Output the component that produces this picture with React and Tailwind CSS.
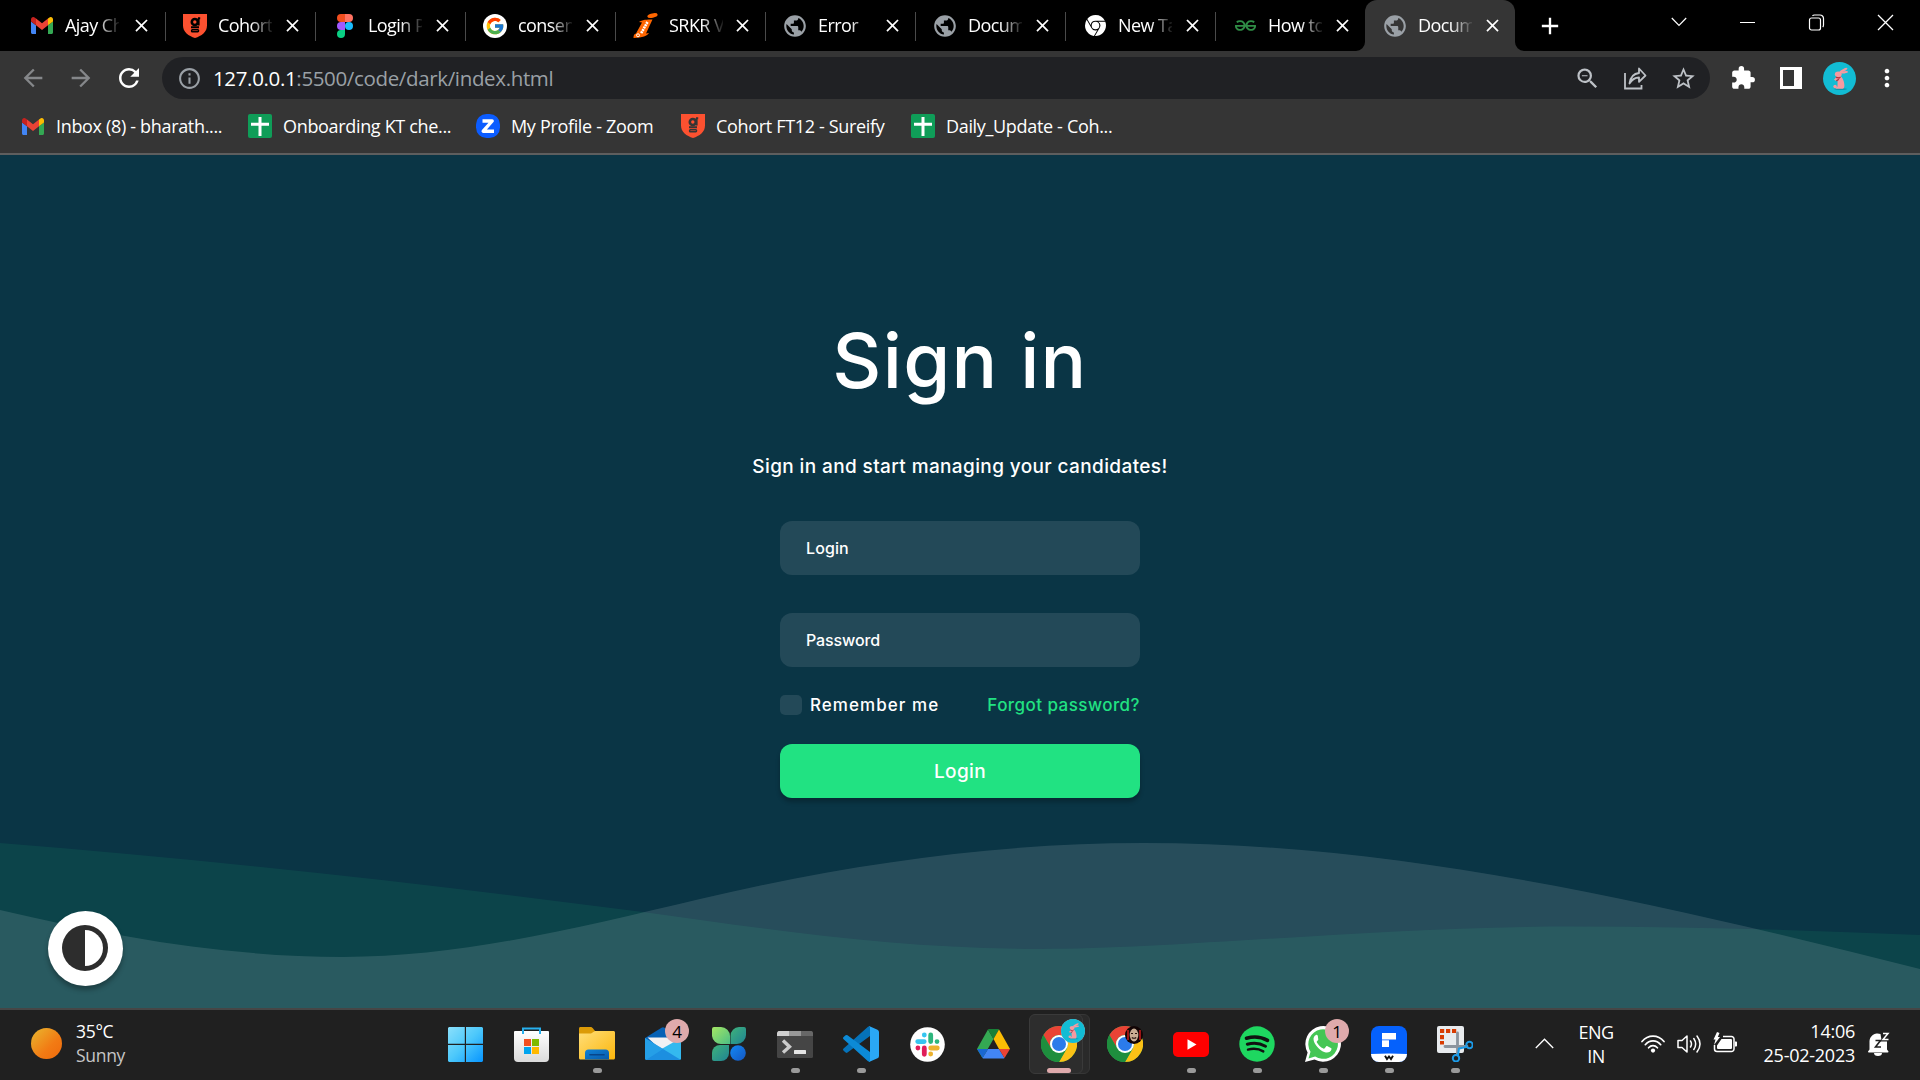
import React from "react";
import {
  MdArrowBack, MdArrowForward, MdRefresh, MdInfoOutline, MdZoomOut, MdStarBorder,
  MdExtension, MdMoreVert, MdClose, MdPublic, MdAdd,
} from "react-icons/md";
import { FcGoogle } from "react-icons/fc";
import { SiGeeksforgeeks, SiGooglechrome } from "react-icons/si";

/* ---------- brand icons ---------- */

const Gmail = () => (
  <svg width="22" height="17" viewBox="52 42 88 66" preserveAspectRatio="none">
    <path fill="#4285f4" d="M58 108h14V74L52 59v43c0 3.32 2.69 6 6 6" />
    <path fill="#34a853" d="M120 108h14c3.32 0 6-2.69 6-6V59l-20 15" />
    <path fill="#fbbc04" d="M120 48v26l20-15v-8c0-7.42-8.47-11.65-14.4-7.2" />
    <path fill="#ea4335" d="M72 74V48l24 18 24-18v26L96 92" />
    <path fill="#c5221f" d="M52 51v8l20 15V48l-5.6-4.2c-5.94-4.45-14.4-.22-14.4 7.2" />
  </svg>
);

const Shield = ({ dark }) => (
  <svg width="24" height="24" viewBox="0 0 24 24">
    <path fill="#fc5130" d="M0 0h24v11.5C24 18 18.5 22 12 24 5.500 22 0 18 0 11.500z" />
    <g fill="none" stroke={dark} strokeWidth="2">
      <circle cx="11.800" cy="8" r="3" strokeWidth="2.600" />
      <path d="M15 4.300h2.200M15.600 4v7.500M8 13.300h8" />
      <path d="M9.500 15.800h5.300c1 0 1 1.900 0 1.900H9.300c-1 0-1-1.500 0-1.900z" strokeWidth="1.500" />
    </g>
  </svg>
);

const Figma = () => (
  <svg width="16" height="24" viewBox="0 0 16 24">
    <path fill="#f24e1e" d="M8 0H4a4 4 0 0 0 0 8h4z" />
    <path fill="#ff7262" d="M8 0h4a4 4 0 0 1 0 8H8z" />
    <path fill="#a259ff" d="M8 8H4a4 4 0 0 0 0 8h4z" />
    <circle fill="#1abcfe" cx="12" cy="12" r="4" />
    <path fill="#0acf83" d="M4 16h4v4a4 4 0 1 1-4-4z" />
  </svg>
);

const GoogleBadge = () => (
  <span className="flex size-6 items-center justify-center rounded-full bg-white">
    <FcGoogle size={20} />
  </span>
);

const Srkr = () => (
  <svg width="25" height="25" viewBox="0 0 25 25">
    <ellipse cx="19.500" cy="2.600" rx="5.200" ry="2.200" fill="#f60" transform="rotate(-12 19.500 2.600)" />
    <path fill="#f60" d="M6 9c3-2.500 8-2.600 13.500-2.600L13 20.500l3-.5c-2 3-6 4.600-15.500 5 0-3 .8-4 2.500-4.500L9 9.500z" />
    <path d="M14.500 9 8 20.500" stroke="#fff" strokeWidth="2.600" strokeDasharray="2 .7" />
    <circle cx="5" cy="22.300" r="1.500" fill="none" stroke="#fff" />
  </svg>
);

const Sheet = () => (
  <svg width="24" height="24" viewBox="0 0 24 24">
    <rect width="24" height="24" rx="2" fill="#0f9d58" />
    <path d="M12 3v19M3 10.300h18" stroke="#fff" strokeWidth="3" />
  </svg>
);

const Zoom = () => (
  <svg width="24" height="24" viewBox="0 0 24 24">
    <rect width="24" height="24" rx="10.500" fill="#0b5cff" />
    <path d="M6.500 7h9.700l-9 10.200H18" fill="none" stroke="#fff" strokeWidth="3.400" strokeLinejoin="round" />
  </svg>
);

const Share = () => (
  <svg width="24" height="24" viewBox="0 0 24 24" fill="none" stroke="#bdc1c6" strokeWidth="1.800">
    <path d="M2 7v15.500h16.500V19" />
    <path d="M6.500 17.500C7.500 11 11 7.500 16 7V2.500l6.500 7-6.500 6.300v-4.300c-4 0-7 1.800-9.500 6z" strokeLinejoin="round" />
  </svg>
);

const Rabbit = ({ size }) => (
  <svg width={size} height={size} viewBox="0 0 32 32">
    <circle cx="16" cy="16" r="16" fill="#12bcd4" />
    <ellipse cx="17" cy="26.300" rx="6.500" ry=".8" fill="#0c97ab" />
    <g fill="#f59aa0">
      <ellipse cx="19.800" cy="8" rx="4.300" ry="1.200" transform="rotate(-28 19.800 8)" />
      <ellipse cx="20.500" cy="10" rx="3.800" ry="1.100" transform="rotate(-8 20.500 10)" />
      <ellipse cx="14.800" cy="11.800" rx="3.300" ry="2.600" />
      <path d="M14 13c3-.5 5 2 6 5.500 1 3.500 1.300 7.200-1 7.500h-6c-1.800-.5-.5-1.700 1-2 .3-3 0-5 .2-7.500l-2 1.700-1.500-1z" />
      <circle cx="11.700" cy="23.800" r="1.700" />
    </g>
    <path d="m12.500 15 3.200.5 1.300-1M13 18.300l2.500-1.500" fill="none" stroke="#b8323f" strokeWidth="1.200" />
  </svg>
);

const Chrome = () => (
  <svg width="36" height="36" viewBox="0 0 36 36">
    <circle cx="18" cy="18" r="18" fill="#34a853" />
    <path fill="#ea4335" d="M2.400 9A18 18 0 0 1 33.600 9H18a9 9 0 0 0-7.800 13.500z" />
    <path fill="#fbc116" d="M33.600 9A18 18 0 0 1 18 36l7.800-13.500A9 9 0 0 0 18 9z" />
    <path fill="#1e8e3e" d="M2.400 9A18 18 0 0 0 18 36l7.800-13.500A9 9 0 0 1 10.200 22.500z" />
    <circle cx="18" cy="18" r="9" fill="#fff" />
    <circle cx="18" cy="18" r="7" fill="#2b7bea" />
  </svg>
);

const Windows = () => (
  <svg width="35" height="35" viewBox="0 0 35 35">
    <defs>
      <linearGradient id="win" x1="0" y1="0" x2="35" y2="35" gradientUnits="userSpaceOnUse">
        <stop stopColor="#8be0fb" /><stop offset=".5" stopColor="#4cc8fb" /><stop offset="1" stopColor="#0795ff" />
      </linearGradient>
    </defs>
    <path fill="url(#win)" d="M1 0h15.800v16.800H0V1zM18 0h16l1 1v15.800H18zM0 18h16.800v17H1l-1-1zM18 18h17v16l-1 1H18z" />
  </svg>
);

const Store = () => (
  <svg width="35" height="35" viewBox="0 0 35 35">
    <defs>
      <linearGradient id="bag" x1="0" y1="0" x2="0" y2="1"><stop stopColor="#fff" /><stop offset="1" stopColor="#dadada" /></linearGradient>
    </defs>
    <path d="M9 6V1.500h17V6" fill="none" stroke="#27b0ee" strokeWidth="2" />
    <path fill="url(#bag)" d="M1 4h33a1 1 0 0 1 1 1v26a4 4 0 0 1-4 4H4a4 4 0 0 1-4-4V5a1 1 0 0 1 1-1z" />
    <path fill="#f25022" d="M10 12h7v7h-7z" /><path fill="#7fba00" d="M18 12h7v7h-7z" />
    <path fill="#00a4ef" d="M10 20h7v7h-7z" /><path fill="#ffb900" d="M18 20h7v7h-7z" />
    <path d="M9 4v3M26 4v3" stroke="#27b0ee" strokeWidth="2" />
  </svg>
);

const Folder = () => (
  <svg width="36" height="34" viewBox="0 0 36 34">
    <defs>
      <linearGradient id="fold" x1="0" y1="0" x2="1" y2="1"><stop stopColor="#ffde79" /><stop offset="1" stopColor="#fcb60b" /></linearGradient>
      <linearGradient id="foldb" x1="0" y1="0" x2="1" y2="1"><stop stopColor="#1083d8" /><stop offset="1" stopColor="#0859a9" /></linearGradient>
    </defs>
    <path fill="#dc9b08" d="M1.500 0h10c1 0 1.500.4 2.200 1.100L16 4v6H0V1.500C0 .6.600 0 1.500 0z" />
    <path fill="url(#fold)" d="M0 6.500h12L16 4h18.500c.9 0 1.500.6 1.500 1.500V31c0 .9-.6 1.500-1.500 1.500h-33C.6 32.500 0 31.900 0 31z" />
    <path fill="url(#foldb)" d="M6 32.500V26a3.500 3.500 0 0 1 3.500-3.500h17A3.500 3.500 0 0 1 30 26v6.500z" />
    <path d="M11 27.800h14" stroke="#07458a" strokeWidth="1.600" strokeLinecap="round" />
  </svg>
);

const Mail = () => (
  <svg width="36" height="34" viewBox="0 0 36 34">
    <path fill="#0661b5" d="M0 11 16.500.7a3 3 0 0 1 3 0L36 11v8H0z" />
    <path fill="#f2f2f4" d="M2.500 10.500h31v10L18 25z" />
    <path fill="#34b9ef" d="M36 11v21a2 2 0 0 1-2 1L16 22.300z" />
    <path fill="#1c8fe0" d="m0 11 36 22H1.500C.6 33 0 32.400 0 31.500z" />
    <path fill="#2aa5ea" d="m0 11 18 11-17 11L0 31.500z" opacity=".7" />
  </svg>
);

const Clover = () => (
  <svg width="34" height="34" viewBox="0 0 34 34">
    <defs>
      <linearGradient id="c1" x1="0" y1="0" x2="1" y2="1"><stop stopColor="#a4e663" /><stop offset="1" stopColor="#4dbf85" /></linearGradient>
      <linearGradient id="c2" x1="0" y1="0" x2="1" y2="1"><stop stopColor="#3fb27a" /><stop offset="1" stopColor="#1f8494" /></linearGradient>
      <linearGradient id="c3" x1="0" y1="0" x2="1" y2="1"><stop stopColor="#1389f5" /><stop offset="1" stopColor="#1457c2" /></linearGradient>
    </defs>
    <path fill="url(#c1)" d="M2 0h7a9 9 0 0 1 9 9v8H9a9 9 0 0 1-9-8V2a2 2 0 0 1 2-2z" />
    <path fill="url(#c2)" d="M34 2v6a9 9 0 0 1-9 9h-6.500V9A9 9 0 0 1 27 0h5a2 2 0 0 1 2 2z" />
    <path fill="url(#c2)" d="M0 32v-6a8 8 0 0 1 8-8h9v8a8 8 0 0 1-8 8H2a2 2 0 0 1-2-2z" />
    <circle cx="26" cy="26" r="7.800" fill="url(#c3)" />
  </svg>
);

const Terminal = () => (
  <svg width="36" height="27" viewBox="0 0 36 27">
    <rect width="36" height="27" rx="1.500" fill="#454545" />
    <path fill="#cfcfcf" d="M1.500 0H12v5H0V1.500z" /><path fill="#989898" d="M12 0h12v5H12z" /><path fill="#676767" d="M24 0h10.500L36 1.500V5H24z" />
    <path d="m6 9.500 6.500 6.300L6 21.500" fill="none" stroke="#ccc" strokeWidth="3.400" />
    <rect x="17" y="19" width="12" height="4" rx=".6" fill="#e4e4e4" />
  </svg>
);

const VsCode = () => (
  <svg width="36" height="36" viewBox="0 0 36 36">
    <path fill="#0572b9" d="M27 0v10L4.500 26.500a1.500 1.500 0 0 1-1.900 0L.6 24.700a1.500 1.500 0 0 1 0-2.200L25 .8z" />
    <path fill="#0c8ad6" d="M27 36V26L4.500 9.300a1.500 1.500 0 0 0-1.900 0l-2 1.800a1.500 1.500 0 0 0 0 2.200L25 35.200z" />
    <path fill="#2aa8f5" d="m26 0 8.500 3.700A2.500 2.500 0 0 1 36 6v24a2.500 2.500 0 0 1-1.500 2.300L26 36c.6-.5 1-1 1-2V2c0-1-.4-1.500-1-2z" />
  </svg>
);

const Slack = () => (
  <svg width="35" height="35" viewBox="0 0 35 35">
    <circle cx="17.500" cy="17.500" r="17.300" fill="#fff" />
    <g strokeWidth="4.800" strokeLinecap="round">
      <path d="M14.300 8v.01M7.700 14.600h6.500" stroke="#36c5f0" />
      <path d="M20.700 8v6.500M27 14.600h.01" stroke="#2eb67d" />
      <path d="M20.700 21h6.600M20.700 27v.01" stroke="#ecb22e" />
      <path d="M14.300 21v6.300M7.900 21h.01" stroke="#e01e5a" />
    </g>
  </svg>
);

const Drive = () => (
  <svg width="33" height="30" viewBox="0 0 33 30">
    <path fill="#34a853" d="M11 .5 0 20l5.500 9L16.500 10z" />
    <path fill="#188038" d="M11 .5C11.500 0 12 0 12.500 0h8c.6 0 1 .1 1.500.5L16.500 10z" />
    <path fill="#fbbc04" d="M22 .5 33 20H22L16.500 10z" />
    <path fill="#4285f4" d="M11 20h11l5.500 9c-.4.400-.8.500-1.200.5H6.700c-.4 0-.8-.1-1.200-.5z" />
    <path fill="#1967d2" d="M0 20h11l-5.500 9z" />
    <path fill="#ea4335" d="M22 20h11l-5.500 9z" />
  </svg>
);

const YouTube = () => (
  <svg width="36" height="25" viewBox="0 0 36 25">
    <rect width="36" height="25" rx="5" fill="#f00" />
    <path fill="#fff" d="m14.500 7.200 9 5.300-9 5.300z" />
  </svg>
);

const Spotify = () => (
  <svg width="36" height="36" viewBox="0 0 36 36">
    <circle cx="18" cy="18" r="17.700" fill="#1ed760" />
    <g fill="none" stroke="#111" strokeLinecap="round">
      <path d="M7.500 12.200c7-2 15-1.300 21 2.200" strokeWidth="3.600" />
      <path d="M8.300 18.200c6-1.700 13-1 18.200 2" strokeWidth="3" />
      <path d="M9 23.600c5.500-1.400 11-.8 15.300 1.800" strokeWidth="2.400" />
    </g>
  </svg>
);

const WhatsApp = () => (
  <svg width="36" height="36" viewBox="0 0 36 36">
    <path fill="#fff" d="M0 36 2.600 26.500A17.800 17.800 0 1 1 9.500 33.400z" />
    <path fill="#45c655" d="m3.500 32.500 2-6.700a14.800 14.800 0 1 1 4.600 4.700z" />
    <path fill="#fff" d="M12.800 9.700c-.5-.9-1.200-.9-1.800-.8-1.800.6-2.800 2.700-2.400 5.100.6 4.300 5.800 10.500 11.300 12.300 3 .9 6-.3 6.500-2.700.2-1 .1-1.300-.5-1.700l-3.400-1.700c-.6-.2-1-.1-1.400.4l-1.400 1.700c-.4.400-.7.500-1.300.2-3-1.300-5-3.400-6.500-6-.3-.5-.2-.8.1-1.200l1.100-1.400c.3-.4.300-.8.100-1.200z" />
  </svg>
);

const BlueF = () => (
  <svg width="36" height="36" viewBox="0 0 36 36">
    <rect width="36" height="36" rx="8" fill="#0561fc" />
    <path fill="#fff" d="M0 28c12-.8 24-.8 36 0a8 8 0 0 1-8 8H8a8 8 0 0 1-8-8z" />
    <path fill="#fff" d="M11 7h14v6.500h-7V21h-7z" />
    <path fill="#0561fc" d="M11 13.500h7v.8h-7z" />
    <path d="m14 29.800 2 3.200 2-2.500 2 2.500 2-3.200" fill="none" stroke="#111" strokeWidth="1.900" />
  </svg>
);

const Snip = () => (
  <svg width="36" height="36" viewBox="0 0 36 36">
    <rect width="27" height="27" rx="2" fill="#e8ebee" />
    <path d="M3 5h16.500M5 9v9.500" fill="none" stroke="#d83b01" strokeWidth="4" strokeDasharray="4.200 1.800" />
    <path d="M20.500 7v22M8 20.500h22" stroke="#8b949e" strokeWidth="2.800" strokeLinecap="round" />
    <circle cx="32.500" cy="19" r="3.200" fill="none" stroke="#1c9be8" strokeWidth="2" />
    <circle cx="19" cy="32.200" r="3.200" fill="none" stroke="#1c9be8" strokeWidth="2" />
    <path d="m21 29 1-6.500 7-1.500" fill="none" stroke="#1c9be8" strokeWidth="2" />
  </svg>
);

const Mask = () => (
  <svg width="18" height="18" viewBox="0 0 18 18">
    <circle cx="9" cy="9" r="9" fill="#120505" />
    <path d="M3 4v10M15 4v10" stroke="#9a1515" strokeWidth="2" />
    <ellipse cx="9" cy="9" rx="4.300" ry="6.500" fill="#c9ad93" />
    <path d="M6 7.500h2M10 7.500h2M6.800 11.500c1.500 1 3 1 4.400 0" stroke="#2b1510" strokeWidth="1.200" fill="none" />
  </svg>
);

/* ---------- browser ---------- */

const globe = <MdPublic size={26} color="#9aa0a6" />;

const tabs = [
  { title: "Ajay Ch", icon: <Gmail />, first: true },
  { title: "Cohort", icon: <Shield dark="#000" /> },
  { title: "Login P", icon: <Figma /> },
  { title: "consen", icon: <GoogleBadge /> },
  { title: "SRKR V", icon: <Srkr />, wide: true },
  { title: "Error", icon: globe },
  { title: "Docum", icon: globe },
  { title: "New Ta", icon: <SiGooglechrome size={21} color="#fff" /> },
  { title: "How to", icon: <SiGeeksforgeeks size={21} color="#2f8d46" /> },
  { title: "Docum", icon: globe, active: true },
];

function Tab({ title, icon, active, first, last, wide }) {
  return (
    <div className={`relative flex h-full w-[150px] shrink-0 items-center ${active ? "rounded-t-[12px] bg-[#353535]" : ""}`}>
      <span className={`flex w-[26px] shrink-0 justify-center ${first ? "ml-[14px]" : "ml-[17px]"}`}>{icon}</span>
      <span className={`w-[54px] overflow-hidden whitespace-nowrap text-[18px] leading-6 tracking-[-0.55px] text-white [mask-image:linear-gradient(to_right,#000_60%,transparent_104%)] ${wide ? "ml-[11px] -mr-px" : "ml-[10px]"}`}>
        <span className="-mt-px block">{title}</span>
      </span>
      <MdClose size={21} className={`shrink-0 text-white ${first ? "ml-[12px]" : "ml-[10px]"}`} />
      {!active && !last && <span className="absolute -right-px top-3 h-[29px] w-[1.5px] bg-[#4a4a4a]" />}
      {active && (
        <>
          <svg className="absolute -left-[9px] bottom-0" width="9" height="9"><path d="M9 0v9H0A9 9 0 0 0 9 0z" fill="#353535" /></svg>
          <svg className="absolute -right-[9px] bottom-0" width="9" height="9"><path d="M0 0v9h9A9 9 0 0 1 0 0z" fill="#353535" /></svg>
        </>
      )}
    </div>
  );
}

function TabStrip() {
  return (
    <div className="flex h-[51px] bg-black pl-[15px]">
      {tabs.map((t, i) => <Tab key={i} {...t} last={i === 8} />)}
      <div className="flex h-full w-[69px] items-center justify-center">
        <MdAdd size={28} className="text-white" />
      </div>
      <div className="ml-auto flex h-[44px] text-white">
        <div className="flex w-[69px] items-center justify-center">
          <svg width="16" height="10" fill="none" stroke="currentColor" strokeWidth="1.200"><path d="m.8 1 7.200 7.500L15.200 1" /></svg>
        </div>
        <div className="flex w-[69px] items-center justify-center"><span className="h-px w-[15px] bg-white" /></div>
        <div className="flex w-[69px] items-center justify-center">
          <svg width="17" height="17" viewBox="0 0 17 17" fill="none" stroke="currentColor" strokeWidth="1.200">
            <rect x="1.500" y="4" width="11" height="12" rx="2" /><path d="M4.500 1.800c.5-.7 1-.8 2-.8H12a3.500 3.500 0 0 1 3.500 3.500V11c0 1-.2 1.500-.8 2" />
          </svg>
        </div>
        <div className="flex w-[69px] items-center justify-center">
          <svg width="17" height="17" fill="none" stroke="currentColor" strokeWidth="1.300"><path d="m1 1 15 15M16 1 1 16" /></svg>
        </div>
      </div>
    </div>
  );
}

function AddressBar() {
  return (
    <div className="flex h-[54px] items-center">
      <div className="ml-[9px] flex w-[48px] justify-center"><MdArrowBack size={28} color="#85878a" /></div>
      <div className="flex w-[48px] justify-center"><MdArrowForward size={28} color="#85878a" /></div>
      <div className="flex w-[48px] justify-center"><MdRefresh size={30} color="#fff" /></div>
      <div className="ml-[9px] flex h-[42px] w-[1548px] items-center rounded-full bg-[#202124]">
        <MdInfoOutline size={25} color="#9aa0a6" className="ml-[15px]" />
        <span className="ml-[11px] text-[20.500px] leading-none tracking-[-0.35px] text-[#9aa0a6]"><span className="text-white">127.0.0.1</span>:5500/code/dark/index.html</span>
        <div className="ml-auto mr-[3px] flex">
          <span className="flex w-12 items-center justify-center"><MdZoomOut size={27} color="#bdc1c6" /></span>
          <span className="flex w-12 items-center justify-center"><Share /></span>
          <span className="flex w-12 items-center justify-center"><MdStarBorder size={27} color="#bdc1c6" /></span>
        </div>
      </div>
      <div className="ml-[9px] flex w-12 justify-center"><MdExtension size={26} color="#fff" /></div>
      <div className="flex w-12 justify-center">
        <svg width="22" height="22"><path fill="#fff" fillRule="evenodd" d="M0 0h22v22H0zM3 3v16h11V3z" /></svg>
      </div>
      <div className="flex w-[49px] justify-center"><Rabbit size={33} /></div>
      <div className="flex w-[45px] justify-center"><MdMoreVert size={28} color="#fff" /></div>
    </div>
  );
}

function Bookmark({ icon, label, width }) {
  return (
    <div className={`flex shrink-0 items-center ${width}`}>
      <span className="flex w-6 justify-center">{icon}</span>
      <span className="-mt-px ml-[11px] whitespace-nowrap text-[18px] leading-6 tracking-[-0.33px] text-white">{label}</span>
    </div>
  );
}

function Bookmarks() {
  return (
    <div className="flex h-[48px] items-center pb-[6px] pl-[21px]">
      <Bookmark icon={<Gmail />} label="Inbox (8) - bharath...." width="w-[227px]" />
      <Bookmark icon={<Sheet />} label="Onboarding KT che..." width="w-[228px]" />
      <Bookmark icon={<Zoom />} label="My Profile - Zoom" width="w-[205px]" />
      <Bookmark icon={<Shield dark="#353535" />} label="Cohort FT12 - Sureify" width="w-[230px]" />
      <Bookmark icon={<Sheet />} label="Daily_Update - Coh..." width="w-[210px]" />
    </div>
  );
}

/* ---------- page ---------- */

function Waves() {
  return (
    <svg className="absolute bottom-0 left-0" width="1920" height="168" viewBox="0 840 1920 168">
      <path fill="#21e282" fillOpacity=".09" d="M0 843C214 860 429 884 643 912 779 931 900 949 1040 949c138 0 340-22.500 532-22.500 116 0 232 3.500 348 8.500v73H0z" />
      <path fill="#fff" fillOpacity=".12" d="M0 910c114 27 229 47 343 47 119 0 238-30 357-58 148-35 296-56 444-56 259 0 517 61 776 126v39H0z" />
    </svg>
  );
}

function SignInPage() {
  return (
    <main className="relative flex h-[853px] flex-col items-center bg-[#0a3545] font-['Inter',sans-serif] font-medium text-white">
      <Waves />
      <h1 className="mt-[159px] h-[92px] whitespace-nowrap text-[76px] leading-[92px] tracking-[1.3px]">Sign in</h1>
      <p className="mt-[49px] h-6 whitespace-nowrap text-[19px] leading-6 tracking-[0.38px]">Sign in and start managing your candidates!</p>
      <form className="relative mt-[42px] flex w-[360px] flex-col">
        <div className="flex h-[54px] items-center rounded-[12px] bg-[#234958] pl-[26px] text-[16px] tracking-[0.1px]">Login</div>
        <div className="mt-[38px] flex h-[54px] items-center rounded-[12px] bg-[#234958] pl-[26px] text-[16px] tracking-[-0.1px]">Password</div>
        <div className="mt-[28px] flex h-5 items-center text-[17px] leading-5">
          <span className="h-5 w-[22px] rounded-[5px] bg-[#234958]" />
          <span className="ml-2 whitespace-nowrap tracking-[1.05px]">Remember me</span>
          <span className="ml-auto whitespace-nowrap tracking-[0.45px] text-[#21e282]">Forgot password?</span>
        </div>
        <button type="button" className="mt-[29px] h-[54px] rounded-[12px] bg-[#21e282] pt-0.5 text-[19px] tracking-[0.4px] shadow-[0_4px_4px_rgba(0,0,0,0.25)]">Login</button>
      </form>
      <div className="absolute bottom-[22px] left-[47.5px] flex size-[75px] items-center justify-center rounded-full bg-white shadow-[0_4px_5px_rgba(0,0,0,0.3)]">
        <svg width="46" height="46" viewBox="0 0 46 46" className="-mt-0.5">
          <circle cx="23" cy="23" r="23" fill="#2d2d2d" /><path fill="#fff" d="M23 5a18 18 0 0 1 0 36z" />
        </svg>
      </div>
    </main>
  );
}

/* ---------- taskbar ---------- */

const apps = [
  { icon: <Windows /> },
  { icon: <Store /> },
  { icon: <Folder />, open: true },
  { icon: <Mail />, badge: "4" },
  { icon: <Clover /> },
  { icon: <Terminal />, open: true },
  { icon: <VsCode />, open: true },
  { icon: <Slack /> },
  { icon: <Drive /> },
  { icon: <Chrome />, badge: <Rabbit size={24} />, active: true },
  { icon: <Chrome />, corner: <Mask /> },
  { icon: <YouTube />, open: true },
  { icon: <Spotify />, open: true },
  { icon: <WhatsApp />, open: true, badge: "1" },
  { icon: <BlueF />, open: true },
  { icon: <Snip />, open: true },
];

function TaskbarApp({ app }) {
  return (
    <div className="relative flex h-[60px] w-[66px] items-center justify-center">
      {app.active && (
        <>
          <span className="absolute left-[9px] top-0 h-[60px] w-[55px] rounded-[6px] border border-[#363636] bg-[#2a2a2a]" />
          <span className="absolute left-[3px] top-0 h-[60px] w-[54px] rounded-[6px] border border-[#3a3a3a] bg-[#2d2d2d]" />
        </>
      )}
      <span className="relative">{app.icon}</span>
      {app.badge && (
        <span className="absolute right-[7px] top-[5px] flex size-6 items-center justify-center rounded-full bg-[#dfaaac] text-[17px] leading-none text-black">{app.badge}</span>
      )}
      {app.corner && <span className="absolute right-[15px] top-3">{app.corner}</span>}
      {app.open && <span className="absolute bottom-px h-[5px] w-[9px] rounded-full bg-[#9a9a9a]" />}
      {app.active && <span className="absolute bottom-px h-[5px] w-6 rounded-full bg-[#dfaaac]" />}
    </div>
  );
}

function Taskbar() {
  return (
    <div className="flex h-[72px] border-t-2 border-[#464646] bg-[#202020] text-[18px] leading-6 text-white">
      <div className="flex w-[432px] pl-[31px]">
        <span className="mt-[18px] size-[31px] rounded-full bg-linear-[135deg,#e9b82f,#f27b14_60%,#ef6a0c]" />
        <div className="ml-[14px] mt-[9px] text-[17.500px] tracking-[-0.3px]">
          <div>35°C</div>
          <div className="text-[#c6c6c6]">Sunny</div>
        </div>
      </div>
      <div className="flex items-start pt-1">{apps.map((a, i) => <TaskbarApp key={i} app={a} />)}</div>
      <div className="ml-[47px] flex h-[66px] items-center">
        <svg width="19" height="11" fill="none" stroke="#fff" strokeWidth="1.300"><path d="m.8 10 8.700-8.800L18.200 10" /></svg>
      </div>
      <div className="ml-[20px] mt-[10px] w-[44px] text-center tracking-[-0.5px]"><div>ENG</div><div>IN</div></div>
      <div className="ml-[23px] flex h-[68px] items-center gap-3">
        <svg width="24" height="18" viewBox="0 0 24 18" fill="none" stroke="#fff" strokeWidth="1.700" strokeLinecap="round">
          <path d="M1 6.500C7-.6 17-.6 23 6.500M4.300 9.700c4.400-5 11-5 15.400 0M7.600 12.800c2.500-2.900 6.300-2.900 8.800 0" /><circle cx="12" cy="15.600" r="2.100" fill="#fff" stroke="none" />
        </svg>
        <svg width="24" height="20" viewBox="0 0 24 20" fill="none" stroke="#fff" strokeWidth="1.500" strokeLinecap="round" strokeLinejoin="round">
          <path d="M1 6.500v7h4l5 4.500V2L5 6.500z" /><path d="M13.500 7c1.300 2 1.300 4 0 6M16.800 4.500c2.500 3.700 2.500 7.300 0 11M20 2c4 5.300 4 10.700 0 16" />
        </svg>
        <svg width="24" height="22" viewBox="0 0 24 22" className="-mt-[3px]">
          <path d="M10 4.500h8.500A2.500 2.500 0 0 1 21 7v10a2.500 2.500 0 0 1-2.500 2.500H4A2.500 2.500 0 0 1 1.500 17v-4" fill="none" stroke="#fff" strokeWidth="1.500" />
          <path fill="#fff" d="M8.500 7H18a1 1 0 0 1 1 1v8a1 1 0 0 1-1 1H5a1 1 0 0 1-1-1v-2.500zM22 9.500h1.200c.5 0 .8.300.8.800v3.400c0 .5-.3.800-.8.800H22zM4 0 .5 7.500h2L1 13l6-8H4.800L6.500 1z" />
        </svg>
      </div>
      <div className="ml-auto mt-[9px] text-right tracking-[-0.25px]"><div>14:06</div><div>25-02-2023</div></div>
      <div className="ml-[13px] mr-[30px] mt-[22px]">
        <svg width="22" height="25" viewBox="0 0 22 25">
          <path fill="#fff" d="M1.500 17.500V10a8 8 0 0 1 11-8l1 6h5.500v9.500l1.500 2c0 .600-.3 1-.8 1H.8c-.5 0-.8-.4-.8-1zM6 21h8a4 3 0 0 1-8 0z" />
          <path d="M15 2h5l-5 6h5.500" fill="none" stroke="#202020" strokeWidth="3" />
          <path d="M7.500 8.500h5L7.500 15H13" fill="none" stroke="#202020" strokeWidth="1.600" />
          <path d="M15 1.500h5l-5 6h5.500" fill="none" stroke="#fff" strokeWidth="1.500" />
        </svg>
      </div>
    </div>
  );
}

export default function App() {
  return (
    <div className="h-[1080px] w-[1920px] overflow-hidden font-['Open_Sans',sans-serif]">
      <TabStrip />
      <header className="h-[104px] border-b-2 border-[#5e5e5e] bg-[#353535]">
        <AddressBar />
        <Bookmarks />
      </header>
      <SignInPage />
      <Taskbar />
    </div>
  );
}
